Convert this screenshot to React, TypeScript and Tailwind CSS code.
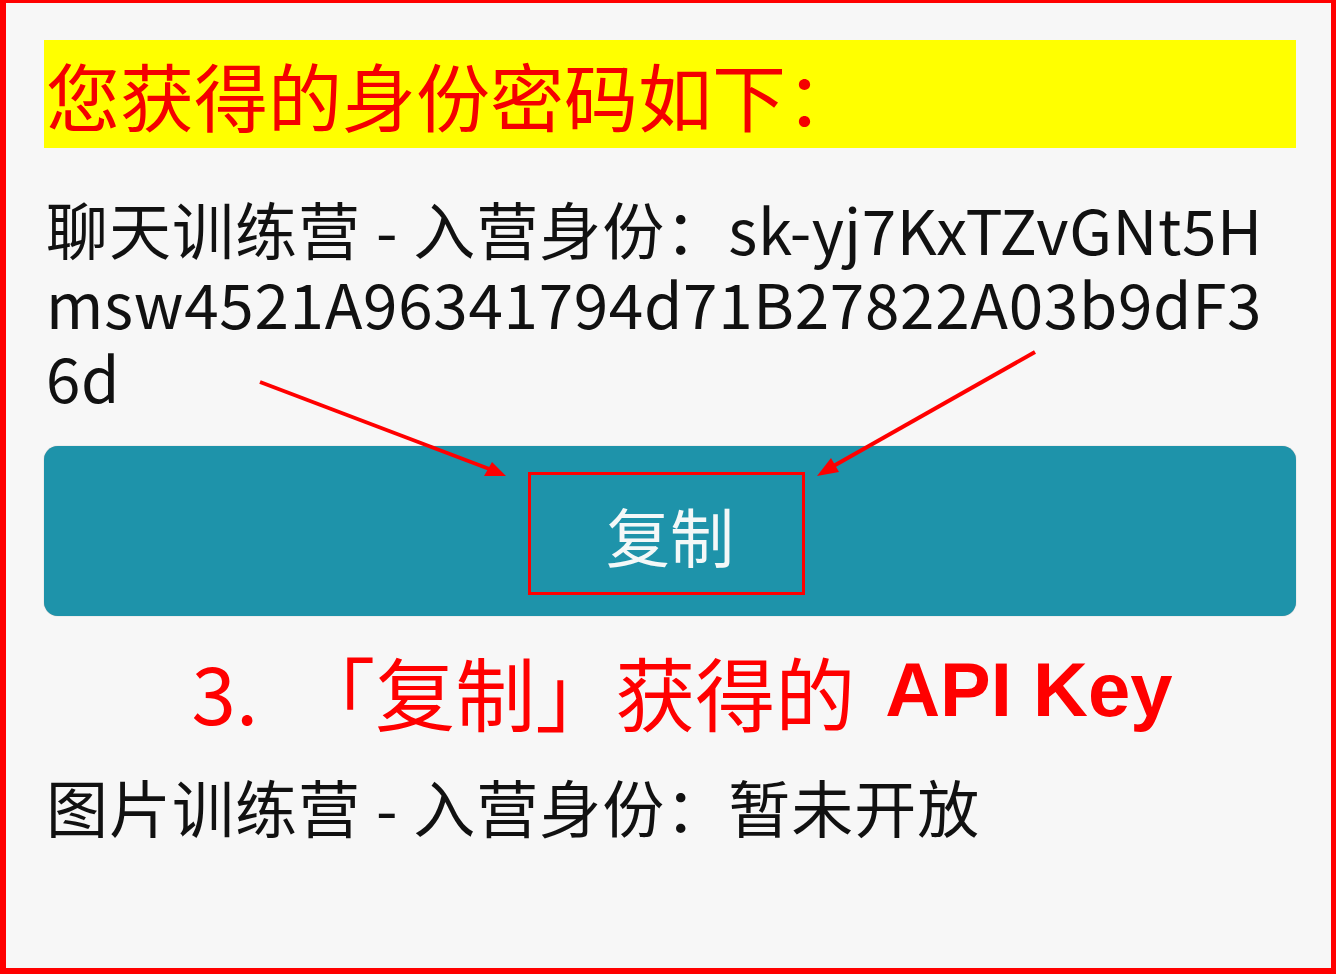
export default function App() {
  return (
    <div className="w-[1336px] h-[974px] bg-[#f7f7f7] border-l-[6px] border-r-[5px] border-t-[3px] border-b-[6px] border-[#ff0000] relative overflow-hidden">
      <div className="pl-[38px] pr-[35px] pt-[37px] flex flex-col" style={{ fontFamily: '"Noto Sans CJK SC", "Noto Sans", sans-serif' }}>
        <div className="bg-[#ffff00] h-[108px] flex items-center pl-[2px]">
          <span className="text-[#f40000] text-[74px] leading-none">您获得的身份密码如下：</span>
        </div>
        <div className="mt-[43px] text-[#111] text-[62px] leading-[74px] pl-[2px] whitespace-nowrap">
          <div>
            <span className="tracking-[1px]">聊天训练营 - 入营身份：</span>
            <span className="tracking-[0.6px]">sk-yj7KxTZvGNt5H</span>
          </div>
          <div className="tracking-[0.7px]">msw4521A96341794d71B27822A03b9dF3</div>
          <div className="tracking-[0.7px]">6d</div>
        </div>
        <button className="mt-[33px] h-[170px] w-full bg-[#1e93aa] rounded-[14px] flex items-center justify-center shadow-[0_0_1px_rgba(0,0,0,0.4)]">
          <span className="text-[#f4f8f8] text-[64px] leading-none mt-[6px]">复制</span>
        </button>
        <div className="mt-[34px] h-[80px] pl-[24px] flex items-center justify-center text-[#ff0000] leading-none">
          <span className="text-[80px]">3.</span>
          <span className="text-[80px] ml-[37px]">「复制」获得的</span>
          <span className="text-[76px] font-bold ml-[30px]" style={{ fontFamily: '"Liberation Sans", Arial, sans-serif' }}>API Key</span>
        </div>
        <div className="mt-[39px] text-[#111] text-[62px] leading-[74px] pl-[2px] tracking-[1px]">
          图片训练营 - 入营身份：暂未开放
        </div>
      </div>

      {/* annotation overlay */}
      <svg className="absolute left-[-6px] top-[-3px] pointer-events-none" width="1336" height="974" viewBox="0 0 1336 974">
        <rect x="529.5" y="473.5" width="274" height="120" fill="none" stroke="#ff0000" strokeWidth="3" />
        <line x1="260" y1="382" x2="492" y2="470" stroke="#ff0000" strokeWidth="4" />
        <polygon points="506,476 484,476 492,462" fill="#ff0000" />
        <line x1="1035" y1="352" x2="830" y2="468" stroke="#ff0000" strokeWidth="4" />
        <polygon points="817,476 831,458 839,472" fill="#ff0000" />
      </svg>
    </div>
  );
}
